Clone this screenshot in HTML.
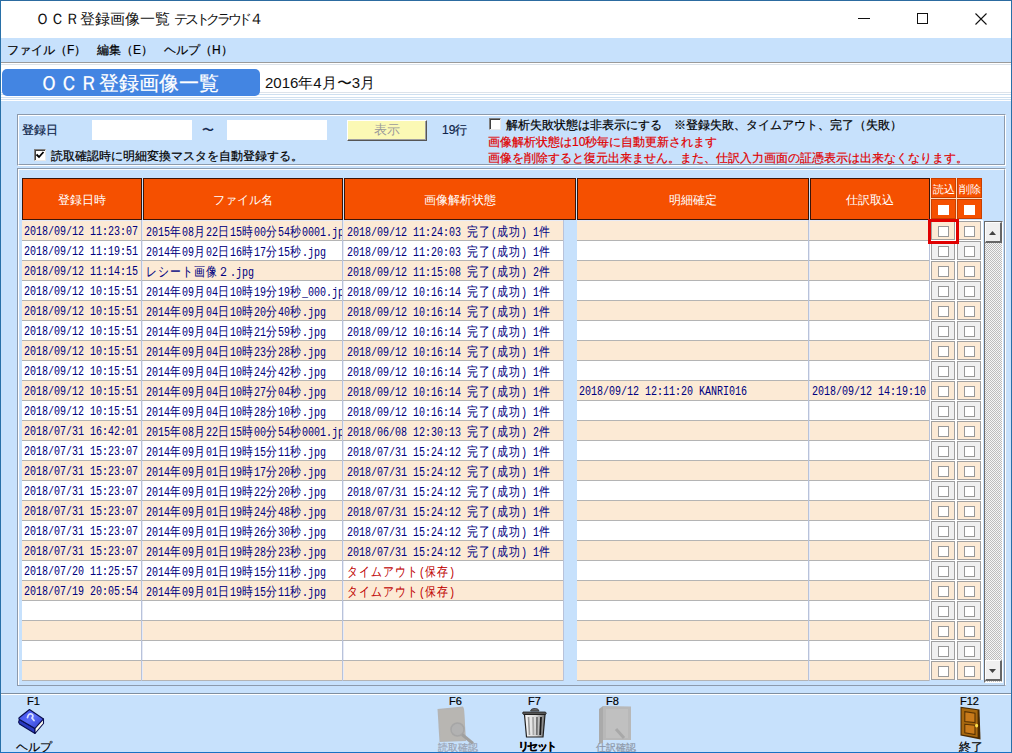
<!DOCTYPE html>
<html><head><meta charset="utf-8"><style>
*{box-sizing:border-box}
html,body{margin:0;padding:0}
body{width:1012px;height:753px;overflow:hidden;position:relative;background:#C7E1FC;font-family:"Liberation Sans",sans-serif;color:#000}
div,span{position:absolute}
.t{-webkit-text-stroke:0.2px currentColor}
.m{-webkit-text-stroke:0.05px currentColor}
.m{font-family:"Liberation Mono",monospace;font-size:12px;line-height:20px;white-space:pre;transform:scaleX(0.8333);transform-origin:0 0;color:#000080}
.m b{font-weight:normal;font-family:"Liberation Sans",sans-serif;font-size:13px;letter-spacing:1.4px;position:static}
.cell{overflow:hidden;height:20px}
.hd{background:#F55000;border:1px solid #3A1408;color:#fff;font-size:12px;text-align:center;line-height:42px}
.ck{width:11px;height:11px;border:1px solid #989898;background:#fff}
.t{white-space:pre}
</style></head><body>

<div style="left:0;top:0;width:1012px;height:753px;border:1px solid #2870A8;border-top-color:#2C6BA0;border-bottom-color:#1872C4;z-index:50;pointer-events:none"></div>
<div style="left:1px;top:1px;width:1010px;height:37px;background:#FFFFFF"></div>
<div class="t" style="left:35px;top:9px;font-size:15px;line-height:20px;color:#101010;-webkit-text-stroke:0">ＯＣＲ登録画像一覧 <span style="position:static;font-size:14px;letter-spacing:-3.3px">テストクラウド</span>４</div>
<div style="left:858px;top:18px;width:12px;height:1px;background:#111"></div>
<div style="left:917px;top:13px;width:11px;height:11px;border:1px solid #111"></div>
<svg style="position:absolute;left:975px;top:13px" width="12" height="12" viewBox="0 0 12 12"><path d="M0.5 0.5L11.5 11.5M11.5 0.5L0.5 11.5" stroke="#111" stroke-width="1.1"/></svg>
<div style="left:1px;top:38px;width:1010px;height:24px;background:#C7E1FC"></div>
<div class="t" style="left:7px;top:42px;font-size:12px;line-height:16px;color:#000">ファイル（F）</div>
<div class="t" style="left:97px;top:42px;font-size:12px;line-height:16px;color:#000">編集（E）</div>
<div class="t" style="left:164px;top:42px;font-size:12px;line-height:16px;color:#000">ヘルプ（H）</div>
<div style="left:1px;top:62px;width:1010px;height:1px;background:#9A9A9A"></div>
<div style="left:1px;top:63px;width:1010px;height:38px;background:#FFFFFF"></div>
<div style="left:1px;top:99px;width:1010px;height:1px;background:#CFE0F0"></div>
<div style="left:1px;top:64px;width:1010px;height:1px;background:#DCE3EA"></div>
<div style="left:1px;top:92px;width:1010px;height:1px;background:#DDE3EA"></div>
<div style="left:1px;top:94px;width:1010px;height:1px;background:#CFE0F0"></div>
<div style="left:1px;top:97px;width:1010px;height:1px;background:#CFE0F0"></div>
<div style="left:2px;top:69px;width:258px;height:27px;background:#4385E2;border-radius:5px"></div>
<div class="t" style="left:39px;top:71px;font-size:20px;line-height:24px;color:#fff">ＯＣＲ登録画像一覧</div>
<div class="t" style="left:265px;top:74px;font-size:15px;line-height:18px;color:#111;-webkit-text-stroke:0">2016年4月〜3月</div>
<div style="left:17px;top:114px;width:989px;height:52px;border-top:1px solid #8C9AAC;border-left:1px solid #8C9AAC;border-right:1px solid #fff;border-bottom:1px solid #fff"></div><div style="left:18px;top:115px;width:987px;height:50px;border-top:1px solid #fff;border-left:1px solid #fff;border-right:1px solid #8C9AAC;border-bottom:1px solid #8C9AAC"></div>
<div class="t" style="left:22px;top:122px;font-size:12px;line-height:16px;color:#0E2448">登録日</div>
<div style="left:92px;top:120px;width:100px;height:20px;background:#fff"></div>
<div class="t" style="left:202px;top:122px;font-size:12px;line-height:16px;color:#0E2448">〜</div>
<div style="left:227px;top:120px;width:100px;height:20px;background:#fff"></div>
<div style="left:347px;top:120px;width:80px;height:21px;background:#FBF9B5;border-top:1px solid #fff;border-left:1px solid #fff;border-right:1px solid #555;border-bottom:1px solid #555;box-shadow:inset -1px -1px 0 #A0A0A0;color:#9A9A9A;font-size:13px;text-align:center;line-height:18px">表示</div>
<div class="t" style="left:442px;top:122px;font-size:12px;line-height:16px;color:#0E2448">19行</div>
<div style="left:34px;top:149px;width:12px;height:12px;background:#fff;border-top:1px solid #808080;border-left:1px solid #808080;border-right:1px solid #E8E8E8;border-bottom:1px solid #E8E8E8;box-shadow:inset 1px 1px 0 #404040"></div>
<svg style="position:absolute;left:35px;top:150px" width="10" height="10" viewBox="0 0 10 10"><path d="M1.5 4.5L4 7L8.5 2" stroke="#000" stroke-width="1.8" fill="none"/></svg>
<div class="t" style="left:51px;top:148px;font-size:12px;line-height:16px;color:#000">読取確認時に明細変換マスタを自動登録する。</div>
<div style="left:489px;top:118px;width:12px;height:12px;background:#fff;border-top:1px solid #808080;border-left:1px solid #808080;border-right:1px solid #E8E8E8;border-bottom:1px solid #E8E8E8;box-shadow:inset 1px 1px 0 #404040"></div>
<div class="t" style="left:506px;top:117px;font-size:12px;line-height:16px;color:#000">解析失敗状態は非表示にする　※登録失敗、タイムアウト、完了（失敗）</div>
<div class="t" style="left:488px;top:134px;font-size:12px;line-height:16px;color:#E00000">画像解析状態は10秒毎に自動更新されます</div>
<div class="t" style="left:488px;top:150px;font-size:12px;line-height:16px;color:#E00000">画像を削除すると復元出来ません。また、仕訳入力画面の証憑表示は出来なくなります。</div>
<div style="left:17px;top:168px;width:989px;height:518px;border-top:1px solid #8C9AAC;border-left:1px solid #8C9AAC;border-right:1px solid #fff;border-bottom:1px solid #8C9AAC"></div>
<div style="left:18px;top:169px;width:987px;height:516px;border-top:1px solid #fff;border-left:1px solid #fff;border-right:1px solid #8C9AAC"></div>
<div class="hd" style="left:22px;top:178px;width:120px;height:42px">登録日時</div>
<div class="hd" style="left:143px;top:178px;width:200px;height:42px">ファイル名</div>
<div class="hd" style="left:344px;top:178px;width:232px;height:42px">画像解析状態</div>
<div class="hd" style="left:577px;top:178px;width:232px;height:42px">明細確定</div>
<div class="hd" style="left:810px;top:178px;width:120px;height:42px">仕訳取込</div>
<div style="left:930px;top:178px;width:52px;height:41px;background:#FBD9C0"></div>
<div style="left:931px;top:178px;width:25px;height:20px;background:#F55000;border:1px solid #C84000;color:#fff;font-size:11px;line-height:20px;text-align:center;white-space:pre">読込</div>
<div style="left:931px;top:199px;width:25px;height:20px;background:#F55000;border:1px solid #C84000"></div>
<div style="left:938px;top:205px;width:11px;height:10px;background:#fff"></div>
<div style="left:957px;top:178px;width:25px;height:20px;background:#F55000;border:1px solid #C84000;color:#fff;font-size:11px;line-height:20px;text-align:center;white-space:pre">削除</div>
<div style="left:957px;top:199px;width:25px;height:20px;background:#F55000;border:1px solid #C84000"></div>
<div style="left:964px;top:205px;width:11px;height:10px;background:#fff"></div>
<div style="left:22px;top:220px;width:908px;height:461px;background:#E6EAF6"></div>
<div class="cell" style="left:22px;top:221px;width:119px;height:19px;background:#FCEAD5"></div>
<div class="cell" style="left:143px;top:221px;width:199px;height:19px;background:#FCEAD5"></div>
<div class="cell" style="left:344px;top:221px;width:219px;height:19px;background:#FCEAD5"></div>
<div class="cell" style="left:577px;top:221px;width:231px;height:19px;background:#FCEAD5"></div>
<div class="cell" style="left:810px;top:221px;width:119px;height:19px;background:#FCEAD5"></div>
<div class="cell" style="left:22px;top:220px;width:119px"><div class="m" style="left:2px;top:2px;color:#000080">2018/09/12 11:23:07</div></div>
<div class="cell" style="left:143px;top:220px;width:199px"><div class="m" style="left:3px;top:2px;color:#000080">2015<b>年</b>08<b>月</b>22<b>日</b>15<b>時</b>00<b>分</b>54<b>秒</b>0001.jpg</div></div>
<div class="cell" style="left:344px;top:220px;width:219px"><div class="m" style="left:3px;top:2px;color:#000080">2018/09/12 11:24:03 <b>完了</b>(<b>成功</b>) 1<b>件</b></div></div>
<div style="left:930px;top:220px;width:27px;height:20px;background:#fff"></div>
<div style="left:931px;top:221px;width:24px;height:19px;background:#FCEAD5;border:1px solid #A0A0A0"></div>
<div class="ck" style="left:938px;top:226px"></div>
<div style="left:956px;top:220px;width:27px;height:20px;background:#fff"></div>
<div style="left:957px;top:221px;width:24px;height:19px;background:#FCEAD5;border:1px solid #A0A0A0"></div>
<div class="ck" style="left:964px;top:226px"></div>
<div class="cell" style="left:22px;top:241px;width:119px;height:19px;background:#FFFFFF"></div>
<div class="cell" style="left:143px;top:241px;width:199px;height:19px;background:#FFFFFF"></div>
<div class="cell" style="left:344px;top:241px;width:219px;height:19px;background:#FFFFFF"></div>
<div class="cell" style="left:577px;top:241px;width:231px;height:19px;background:#FFFFFF"></div>
<div class="cell" style="left:810px;top:241px;width:119px;height:19px;background:#FFFFFF"></div>
<div class="cell" style="left:22px;top:240px;width:119px"><div class="m" style="left:2px;top:2px;color:#000080">2018/09/12 11:19:51</div></div>
<div class="cell" style="left:143px;top:240px;width:199px"><div class="m" style="left:3px;top:2px;color:#000080">2014<b>年</b>09<b>月</b>02<b>日</b>16<b>時</b>17<b>分</b>15<b>秒</b>.jpg</div></div>
<div class="cell" style="left:344px;top:240px;width:219px"><div class="m" style="left:3px;top:2px;color:#000080">2018/09/12 11:20:03 <b>完了</b>(<b>成功</b>) 1<b>件</b></div></div>
<div style="left:930px;top:240px;width:27px;height:20px;background:#fff"></div>
<div style="left:931px;top:241px;width:24px;height:19px;background:#F0F0F0;border:1px solid #A0A0A0"></div>
<div class="ck" style="left:938px;top:246px"></div>
<div style="left:956px;top:240px;width:27px;height:20px;background:#fff"></div>
<div style="left:957px;top:241px;width:24px;height:19px;background:#F0F0F0;border:1px solid #A0A0A0"></div>
<div class="ck" style="left:964px;top:246px"></div>
<div class="cell" style="left:22px;top:261px;width:119px;height:19px;background:#FCEAD5"></div>
<div class="cell" style="left:143px;top:261px;width:199px;height:19px;background:#FCEAD5"></div>
<div class="cell" style="left:344px;top:261px;width:219px;height:19px;background:#FCEAD5"></div>
<div class="cell" style="left:577px;top:261px;width:231px;height:19px;background:#FCEAD5"></div>
<div class="cell" style="left:810px;top:261px;width:119px;height:19px;background:#FCEAD5"></div>
<div class="cell" style="left:22px;top:260px;width:119px"><div class="m" style="left:2px;top:2px;color:#000080">2018/09/12 11:14:15</div></div>
<div class="cell" style="left:143px;top:260px;width:199px"><div class="m" style="left:3px;top:2px;color:#000080"><b>レシート画像２</b>.jpg</div></div>
<div class="cell" style="left:344px;top:260px;width:219px"><div class="m" style="left:3px;top:2px;color:#000080">2018/09/12 11:15:08 <b>完了</b>(<b>成功</b>) 2<b>件</b></div></div>
<div style="left:930px;top:260px;width:27px;height:20px;background:#fff"></div>
<div style="left:931px;top:261px;width:24px;height:19px;background:#FCEAD5;border:1px solid #A0A0A0"></div>
<div class="ck" style="left:938px;top:266px"></div>
<div style="left:956px;top:260px;width:27px;height:20px;background:#fff"></div>
<div style="left:957px;top:261px;width:24px;height:19px;background:#FCEAD5;border:1px solid #A0A0A0"></div>
<div class="ck" style="left:964px;top:266px"></div>
<div class="cell" style="left:22px;top:281px;width:119px;height:19px;background:#FFFFFF"></div>
<div class="cell" style="left:143px;top:281px;width:199px;height:19px;background:#FFFFFF"></div>
<div class="cell" style="left:344px;top:281px;width:219px;height:19px;background:#FFFFFF"></div>
<div class="cell" style="left:577px;top:281px;width:231px;height:19px;background:#FFFFFF"></div>
<div class="cell" style="left:810px;top:281px;width:119px;height:19px;background:#FFFFFF"></div>
<div class="cell" style="left:22px;top:280px;width:119px"><div class="m" style="left:2px;top:2px;color:#000080">2018/09/12 10:15:51</div></div>
<div class="cell" style="left:143px;top:280px;width:199px"><div class="m" style="left:3px;top:2px;color:#000080">2014<b>年</b>09<b>月</b>04<b>日</b>10<b>時</b>19<b>分</b>19<b>秒</b>_000.jpg</div></div>
<div class="cell" style="left:344px;top:280px;width:219px"><div class="m" style="left:3px;top:2px;color:#000080">2018/09/12 10:16:14 <b>完了</b>(<b>成功</b>) 1<b>件</b></div></div>
<div style="left:930px;top:280px;width:27px;height:20px;background:#fff"></div>
<div style="left:931px;top:281px;width:24px;height:19px;background:#F0F0F0;border:1px solid #A0A0A0"></div>
<div class="ck" style="left:938px;top:286px"></div>
<div style="left:956px;top:280px;width:27px;height:20px;background:#fff"></div>
<div style="left:957px;top:281px;width:24px;height:19px;background:#F0F0F0;border:1px solid #A0A0A0"></div>
<div class="ck" style="left:964px;top:286px"></div>
<div class="cell" style="left:22px;top:301px;width:119px;height:19px;background:#FCEAD5"></div>
<div class="cell" style="left:143px;top:301px;width:199px;height:19px;background:#FCEAD5"></div>
<div class="cell" style="left:344px;top:301px;width:219px;height:19px;background:#FCEAD5"></div>
<div class="cell" style="left:577px;top:301px;width:231px;height:19px;background:#FCEAD5"></div>
<div class="cell" style="left:810px;top:301px;width:119px;height:19px;background:#FCEAD5"></div>
<div class="cell" style="left:22px;top:300px;width:119px"><div class="m" style="left:2px;top:2px;color:#000080">2018/09/12 10:15:51</div></div>
<div class="cell" style="left:143px;top:300px;width:199px"><div class="m" style="left:3px;top:2px;color:#000080">2014<b>年</b>09<b>月</b>04<b>日</b>10<b>時</b>20<b>分</b>40<b>秒</b>.jpg</div></div>
<div class="cell" style="left:344px;top:300px;width:219px"><div class="m" style="left:3px;top:2px;color:#000080">2018/09/12 10:16:14 <b>完了</b>(<b>成功</b>) 1<b>件</b></div></div>
<div style="left:930px;top:300px;width:27px;height:20px;background:#fff"></div>
<div style="left:931px;top:301px;width:24px;height:19px;background:#FCEAD5;border:1px solid #A0A0A0"></div>
<div class="ck" style="left:938px;top:306px"></div>
<div style="left:956px;top:300px;width:27px;height:20px;background:#fff"></div>
<div style="left:957px;top:301px;width:24px;height:19px;background:#FCEAD5;border:1px solid #A0A0A0"></div>
<div class="ck" style="left:964px;top:306px"></div>
<div class="cell" style="left:22px;top:321px;width:119px;height:19px;background:#FFFFFF"></div>
<div class="cell" style="left:143px;top:321px;width:199px;height:19px;background:#FFFFFF"></div>
<div class="cell" style="left:344px;top:321px;width:219px;height:19px;background:#FFFFFF"></div>
<div class="cell" style="left:577px;top:321px;width:231px;height:19px;background:#FFFFFF"></div>
<div class="cell" style="left:810px;top:321px;width:119px;height:19px;background:#FFFFFF"></div>
<div class="cell" style="left:22px;top:320px;width:119px"><div class="m" style="left:2px;top:2px;color:#000080">2018/09/12 10:15:51</div></div>
<div class="cell" style="left:143px;top:320px;width:199px"><div class="m" style="left:3px;top:2px;color:#000080">2014<b>年</b>09<b>月</b>04<b>日</b>10<b>時</b>21<b>分</b>59<b>秒</b>.jpg</div></div>
<div class="cell" style="left:344px;top:320px;width:219px"><div class="m" style="left:3px;top:2px;color:#000080">2018/09/12 10:16:14 <b>完了</b>(<b>成功</b>) 1<b>件</b></div></div>
<div style="left:930px;top:320px;width:27px;height:20px;background:#fff"></div>
<div style="left:931px;top:321px;width:24px;height:19px;background:#F0F0F0;border:1px solid #A0A0A0"></div>
<div class="ck" style="left:938px;top:326px"></div>
<div style="left:956px;top:320px;width:27px;height:20px;background:#fff"></div>
<div style="left:957px;top:321px;width:24px;height:19px;background:#F0F0F0;border:1px solid #A0A0A0"></div>
<div class="ck" style="left:964px;top:326px"></div>
<div class="cell" style="left:22px;top:341px;width:119px;height:19px;background:#FCEAD5"></div>
<div class="cell" style="left:143px;top:341px;width:199px;height:19px;background:#FCEAD5"></div>
<div class="cell" style="left:344px;top:341px;width:219px;height:19px;background:#FCEAD5"></div>
<div class="cell" style="left:577px;top:341px;width:231px;height:19px;background:#FCEAD5"></div>
<div class="cell" style="left:810px;top:341px;width:119px;height:19px;background:#FCEAD5"></div>
<div class="cell" style="left:22px;top:340px;width:119px"><div class="m" style="left:2px;top:2px;color:#000080">2018/09/12 10:15:51</div></div>
<div class="cell" style="left:143px;top:340px;width:199px"><div class="m" style="left:3px;top:2px;color:#000080">2014<b>年</b>09<b>月</b>04<b>日</b>10<b>時</b>23<b>分</b>28<b>秒</b>.jpg</div></div>
<div class="cell" style="left:344px;top:340px;width:219px"><div class="m" style="left:3px;top:2px;color:#000080">2018/09/12 10:16:14 <b>完了</b>(<b>成功</b>) 1<b>件</b></div></div>
<div style="left:930px;top:340px;width:27px;height:20px;background:#fff"></div>
<div style="left:931px;top:341px;width:24px;height:19px;background:#FCEAD5;border:1px solid #A0A0A0"></div>
<div class="ck" style="left:938px;top:346px"></div>
<div style="left:956px;top:340px;width:27px;height:20px;background:#fff"></div>
<div style="left:957px;top:341px;width:24px;height:19px;background:#FCEAD5;border:1px solid #A0A0A0"></div>
<div class="ck" style="left:964px;top:346px"></div>
<div class="cell" style="left:22px;top:361px;width:119px;height:19px;background:#FFFFFF"></div>
<div class="cell" style="left:143px;top:361px;width:199px;height:19px;background:#FFFFFF"></div>
<div class="cell" style="left:344px;top:361px;width:219px;height:19px;background:#FFFFFF"></div>
<div class="cell" style="left:577px;top:361px;width:231px;height:19px;background:#FFFFFF"></div>
<div class="cell" style="left:810px;top:361px;width:119px;height:19px;background:#FFFFFF"></div>
<div class="cell" style="left:22px;top:360px;width:119px"><div class="m" style="left:2px;top:2px;color:#000080">2018/09/12 10:15:51</div></div>
<div class="cell" style="left:143px;top:360px;width:199px"><div class="m" style="left:3px;top:2px;color:#000080">2014<b>年</b>09<b>月</b>04<b>日</b>10<b>時</b>24<b>分</b>42<b>秒</b>.jpg</div></div>
<div class="cell" style="left:344px;top:360px;width:219px"><div class="m" style="left:3px;top:2px;color:#000080">2018/09/12 10:16:14 <b>完了</b>(<b>成功</b>) 1<b>件</b></div></div>
<div style="left:930px;top:360px;width:27px;height:20px;background:#fff"></div>
<div style="left:931px;top:361px;width:24px;height:19px;background:#F0F0F0;border:1px solid #A0A0A0"></div>
<div class="ck" style="left:938px;top:366px"></div>
<div style="left:956px;top:360px;width:27px;height:20px;background:#fff"></div>
<div style="left:957px;top:361px;width:24px;height:19px;background:#F0F0F0;border:1px solid #A0A0A0"></div>
<div class="ck" style="left:964px;top:366px"></div>
<div class="cell" style="left:22px;top:381px;width:119px;height:19px;background:#FCEAD5"></div>
<div class="cell" style="left:143px;top:381px;width:199px;height:19px;background:#FCEAD5"></div>
<div class="cell" style="left:344px;top:381px;width:219px;height:19px;background:#FCEAD5"></div>
<div class="cell" style="left:577px;top:381px;width:231px;height:19px;background:#FCEAD5"></div>
<div class="cell" style="left:810px;top:381px;width:119px;height:19px;background:#FCEAD5"></div>
<div class="cell" style="left:22px;top:380px;width:119px"><div class="m" style="left:2px;top:2px;color:#000080">2018/09/12 10:15:51</div></div>
<div class="cell" style="left:143px;top:380px;width:199px"><div class="m" style="left:3px;top:2px;color:#000080">2014<b>年</b>09<b>月</b>04<b>日</b>10<b>時</b>27<b>分</b>04<b>秒</b>.jpg</div></div>
<div class="cell" style="left:344px;top:380px;width:219px"><div class="m" style="left:3px;top:2px;color:#000080">2018/09/12 10:16:14 <b>完了</b>(<b>成功</b>) 1<b>件</b></div></div>
<div class="cell" style="left:577px;top:380px;width:231px"><div class="m" style="left:2px;top:2px;color:#000080">2018/09/12 12:11:20 KANRI016</div></div>
<div class="cell" style="left:810px;top:380px;width:119px"><div class="m" style="left:2px;top:2px;color:#000080">2018/09/12 14:19:10</div></div>
<div style="left:930px;top:380px;width:27px;height:20px;background:#fff"></div>
<div style="left:931px;top:381px;width:24px;height:19px;background:#FCEAD5;border:1px solid #A0A0A0"></div>
<div class="ck" style="left:938px;top:386px"></div>
<div style="left:956px;top:380px;width:27px;height:20px;background:#fff"></div>
<div style="left:957px;top:381px;width:24px;height:19px;background:#FCEAD5;border:1px solid #A0A0A0"></div>
<div class="ck" style="left:964px;top:386px"></div>
<div class="cell" style="left:22px;top:401px;width:119px;height:19px;background:#FFFFFF"></div>
<div class="cell" style="left:143px;top:401px;width:199px;height:19px;background:#FFFFFF"></div>
<div class="cell" style="left:344px;top:401px;width:219px;height:19px;background:#FFFFFF"></div>
<div class="cell" style="left:577px;top:401px;width:231px;height:19px;background:#FFFFFF"></div>
<div class="cell" style="left:810px;top:401px;width:119px;height:19px;background:#FFFFFF"></div>
<div class="cell" style="left:22px;top:400px;width:119px"><div class="m" style="left:2px;top:2px;color:#000080">2018/09/12 10:15:51</div></div>
<div class="cell" style="left:143px;top:400px;width:199px"><div class="m" style="left:3px;top:2px;color:#000080">2014<b>年</b>09<b>月</b>04<b>日</b>10<b>時</b>28<b>分</b>10<b>秒</b>.jpg</div></div>
<div class="cell" style="left:344px;top:400px;width:219px"><div class="m" style="left:3px;top:2px;color:#000080">2018/09/12 10:16:14 <b>完了</b>(<b>成功</b>) 1<b>件</b></div></div>
<div style="left:930px;top:400px;width:27px;height:20px;background:#fff"></div>
<div style="left:931px;top:401px;width:24px;height:19px;background:#F0F0F0;border:1px solid #A0A0A0"></div>
<div class="ck" style="left:938px;top:406px"></div>
<div style="left:956px;top:400px;width:27px;height:20px;background:#fff"></div>
<div style="left:957px;top:401px;width:24px;height:19px;background:#F0F0F0;border:1px solid #A0A0A0"></div>
<div class="ck" style="left:964px;top:406px"></div>
<div class="cell" style="left:22px;top:421px;width:119px;height:19px;background:#FCEAD5"></div>
<div class="cell" style="left:143px;top:421px;width:199px;height:19px;background:#FCEAD5"></div>
<div class="cell" style="left:344px;top:421px;width:219px;height:19px;background:#FCEAD5"></div>
<div class="cell" style="left:577px;top:421px;width:231px;height:19px;background:#FCEAD5"></div>
<div class="cell" style="left:810px;top:421px;width:119px;height:19px;background:#FCEAD5"></div>
<div class="cell" style="left:22px;top:420px;width:119px"><div class="m" style="left:2px;top:2px;color:#000080">2018/07/31 16:42:01</div></div>
<div class="cell" style="left:143px;top:420px;width:199px"><div class="m" style="left:3px;top:2px;color:#000080">2015<b>年</b>08<b>月</b>22<b>日</b>15<b>時</b>00<b>分</b>54<b>秒</b>0001.jpg</div></div>
<div class="cell" style="left:344px;top:420px;width:219px"><div class="m" style="left:3px;top:2px;color:#000080">2018/06/08 12:30:13 <b>完了</b>(<b>成功</b>) 2<b>件</b></div></div>
<div style="left:930px;top:420px;width:27px;height:20px;background:#fff"></div>
<div style="left:931px;top:421px;width:24px;height:19px;background:#FCEAD5;border:1px solid #A0A0A0"></div>
<div class="ck" style="left:938px;top:426px"></div>
<div style="left:956px;top:420px;width:27px;height:20px;background:#fff"></div>
<div style="left:957px;top:421px;width:24px;height:19px;background:#FCEAD5;border:1px solid #A0A0A0"></div>
<div class="ck" style="left:964px;top:426px"></div>
<div class="cell" style="left:22px;top:441px;width:119px;height:19px;background:#FFFFFF"></div>
<div class="cell" style="left:143px;top:441px;width:199px;height:19px;background:#FFFFFF"></div>
<div class="cell" style="left:344px;top:441px;width:219px;height:19px;background:#FFFFFF"></div>
<div class="cell" style="left:577px;top:441px;width:231px;height:19px;background:#FFFFFF"></div>
<div class="cell" style="left:810px;top:441px;width:119px;height:19px;background:#FFFFFF"></div>
<div class="cell" style="left:22px;top:440px;width:119px"><div class="m" style="left:2px;top:2px;color:#000080">2018/07/31 15:23:07</div></div>
<div class="cell" style="left:143px;top:440px;width:199px"><div class="m" style="left:3px;top:2px;color:#000080">2014<b>年</b>09<b>月</b>01<b>日</b>19<b>時</b>15<b>分</b>11<b>秒</b>.jpg</div></div>
<div class="cell" style="left:344px;top:440px;width:219px"><div class="m" style="left:3px;top:2px;color:#000080">2018/07/31 15:24:12 <b>完了</b>(<b>成功</b>) 1<b>件</b></div></div>
<div style="left:930px;top:440px;width:27px;height:20px;background:#fff"></div>
<div style="left:931px;top:441px;width:24px;height:19px;background:#F0F0F0;border:1px solid #A0A0A0"></div>
<div class="ck" style="left:938px;top:446px"></div>
<div style="left:956px;top:440px;width:27px;height:20px;background:#fff"></div>
<div style="left:957px;top:441px;width:24px;height:19px;background:#F0F0F0;border:1px solid #A0A0A0"></div>
<div class="ck" style="left:964px;top:446px"></div>
<div class="cell" style="left:22px;top:461px;width:119px;height:19px;background:#FCEAD5"></div>
<div class="cell" style="left:143px;top:461px;width:199px;height:19px;background:#FCEAD5"></div>
<div class="cell" style="left:344px;top:461px;width:219px;height:19px;background:#FCEAD5"></div>
<div class="cell" style="left:577px;top:461px;width:231px;height:19px;background:#FCEAD5"></div>
<div class="cell" style="left:810px;top:461px;width:119px;height:19px;background:#FCEAD5"></div>
<div class="cell" style="left:22px;top:460px;width:119px"><div class="m" style="left:2px;top:2px;color:#000080">2018/07/31 15:23:07</div></div>
<div class="cell" style="left:143px;top:460px;width:199px"><div class="m" style="left:3px;top:2px;color:#000080">2014<b>年</b>09<b>月</b>01<b>日</b>19<b>時</b>17<b>分</b>20<b>秒</b>.jpg</div></div>
<div class="cell" style="left:344px;top:460px;width:219px"><div class="m" style="left:3px;top:2px;color:#000080">2018/07/31 15:24:12 <b>完了</b>(<b>成功</b>) 1<b>件</b></div></div>
<div style="left:930px;top:460px;width:27px;height:20px;background:#fff"></div>
<div style="left:931px;top:461px;width:24px;height:19px;background:#FCEAD5;border:1px solid #A0A0A0"></div>
<div class="ck" style="left:938px;top:466px"></div>
<div style="left:956px;top:460px;width:27px;height:20px;background:#fff"></div>
<div style="left:957px;top:461px;width:24px;height:19px;background:#FCEAD5;border:1px solid #A0A0A0"></div>
<div class="ck" style="left:964px;top:466px"></div>
<div class="cell" style="left:22px;top:481px;width:119px;height:19px;background:#FFFFFF"></div>
<div class="cell" style="left:143px;top:481px;width:199px;height:19px;background:#FFFFFF"></div>
<div class="cell" style="left:344px;top:481px;width:219px;height:19px;background:#FFFFFF"></div>
<div class="cell" style="left:577px;top:481px;width:231px;height:19px;background:#FFFFFF"></div>
<div class="cell" style="left:810px;top:481px;width:119px;height:19px;background:#FFFFFF"></div>
<div class="cell" style="left:22px;top:480px;width:119px"><div class="m" style="left:2px;top:2px;color:#000080">2018/07/31 15:23:07</div></div>
<div class="cell" style="left:143px;top:480px;width:199px"><div class="m" style="left:3px;top:2px;color:#000080">2014<b>年</b>09<b>月</b>01<b>日</b>19<b>時</b>22<b>分</b>20<b>秒</b>.jpg</div></div>
<div class="cell" style="left:344px;top:480px;width:219px"><div class="m" style="left:3px;top:2px;color:#000080">2018/07/31 15:24:12 <b>完了</b>(<b>成功</b>) 1<b>件</b></div></div>
<div style="left:930px;top:480px;width:27px;height:20px;background:#fff"></div>
<div style="left:931px;top:481px;width:24px;height:19px;background:#F0F0F0;border:1px solid #A0A0A0"></div>
<div class="ck" style="left:938px;top:486px"></div>
<div style="left:956px;top:480px;width:27px;height:20px;background:#fff"></div>
<div style="left:957px;top:481px;width:24px;height:19px;background:#F0F0F0;border:1px solid #A0A0A0"></div>
<div class="ck" style="left:964px;top:486px"></div>
<div class="cell" style="left:22px;top:501px;width:119px;height:19px;background:#FCEAD5"></div>
<div class="cell" style="left:143px;top:501px;width:199px;height:19px;background:#FCEAD5"></div>
<div class="cell" style="left:344px;top:501px;width:219px;height:19px;background:#FCEAD5"></div>
<div class="cell" style="left:577px;top:501px;width:231px;height:19px;background:#FCEAD5"></div>
<div class="cell" style="left:810px;top:501px;width:119px;height:19px;background:#FCEAD5"></div>
<div class="cell" style="left:22px;top:500px;width:119px"><div class="m" style="left:2px;top:2px;color:#000080">2018/07/31 15:23:07</div></div>
<div class="cell" style="left:143px;top:500px;width:199px"><div class="m" style="left:3px;top:2px;color:#000080">2014<b>年</b>09<b>月</b>01<b>日</b>19<b>時</b>24<b>分</b>48<b>秒</b>.jpg</div></div>
<div class="cell" style="left:344px;top:500px;width:219px"><div class="m" style="left:3px;top:2px;color:#000080">2018/07/31 15:24:12 <b>完了</b>(<b>成功</b>) 1<b>件</b></div></div>
<div style="left:930px;top:500px;width:27px;height:20px;background:#fff"></div>
<div style="left:931px;top:501px;width:24px;height:19px;background:#FCEAD5;border:1px solid #A0A0A0"></div>
<div class="ck" style="left:938px;top:506px"></div>
<div style="left:956px;top:500px;width:27px;height:20px;background:#fff"></div>
<div style="left:957px;top:501px;width:24px;height:19px;background:#FCEAD5;border:1px solid #A0A0A0"></div>
<div class="ck" style="left:964px;top:506px"></div>
<div class="cell" style="left:22px;top:521px;width:119px;height:19px;background:#FFFFFF"></div>
<div class="cell" style="left:143px;top:521px;width:199px;height:19px;background:#FFFFFF"></div>
<div class="cell" style="left:344px;top:521px;width:219px;height:19px;background:#FFFFFF"></div>
<div class="cell" style="left:577px;top:521px;width:231px;height:19px;background:#FFFFFF"></div>
<div class="cell" style="left:810px;top:521px;width:119px;height:19px;background:#FFFFFF"></div>
<div class="cell" style="left:22px;top:520px;width:119px"><div class="m" style="left:2px;top:2px;color:#000080">2018/07/31 15:23:07</div></div>
<div class="cell" style="left:143px;top:520px;width:199px"><div class="m" style="left:3px;top:2px;color:#000080">2014<b>年</b>09<b>月</b>01<b>日</b>19<b>時</b>26<b>分</b>30<b>秒</b>.jpg</div></div>
<div class="cell" style="left:344px;top:520px;width:219px"><div class="m" style="left:3px;top:2px;color:#000080">2018/07/31 15:24:12 <b>完了</b>(<b>成功</b>) 1<b>件</b></div></div>
<div style="left:930px;top:520px;width:27px;height:20px;background:#fff"></div>
<div style="left:931px;top:521px;width:24px;height:19px;background:#F0F0F0;border:1px solid #A0A0A0"></div>
<div class="ck" style="left:938px;top:526px"></div>
<div style="left:956px;top:520px;width:27px;height:20px;background:#fff"></div>
<div style="left:957px;top:521px;width:24px;height:19px;background:#F0F0F0;border:1px solid #A0A0A0"></div>
<div class="ck" style="left:964px;top:526px"></div>
<div class="cell" style="left:22px;top:541px;width:119px;height:19px;background:#FCEAD5"></div>
<div class="cell" style="left:143px;top:541px;width:199px;height:19px;background:#FCEAD5"></div>
<div class="cell" style="left:344px;top:541px;width:219px;height:19px;background:#FCEAD5"></div>
<div class="cell" style="left:577px;top:541px;width:231px;height:19px;background:#FCEAD5"></div>
<div class="cell" style="left:810px;top:541px;width:119px;height:19px;background:#FCEAD5"></div>
<div class="cell" style="left:22px;top:540px;width:119px"><div class="m" style="left:2px;top:2px;color:#000080">2018/07/31 15:23:07</div></div>
<div class="cell" style="left:143px;top:540px;width:199px"><div class="m" style="left:3px;top:2px;color:#000080">2014<b>年</b>09<b>月</b>01<b>日</b>19<b>時</b>28<b>分</b>23<b>秒</b>.jpg</div></div>
<div class="cell" style="left:344px;top:540px;width:219px"><div class="m" style="left:3px;top:2px;color:#000080">2018/07/31 15:24:12 <b>完了</b>(<b>成功</b>) 1<b>件</b></div></div>
<div style="left:930px;top:540px;width:27px;height:20px;background:#fff"></div>
<div style="left:931px;top:541px;width:24px;height:19px;background:#FCEAD5;border:1px solid #A0A0A0"></div>
<div class="ck" style="left:938px;top:546px"></div>
<div style="left:956px;top:540px;width:27px;height:20px;background:#fff"></div>
<div style="left:957px;top:541px;width:24px;height:19px;background:#FCEAD5;border:1px solid #A0A0A0"></div>
<div class="ck" style="left:964px;top:546px"></div>
<div class="cell" style="left:22px;top:561px;width:119px;height:19px;background:#FFFFFF"></div>
<div class="cell" style="left:143px;top:561px;width:199px;height:19px;background:#FFFFFF"></div>
<div class="cell" style="left:344px;top:561px;width:219px;height:19px;background:#FFFFFF"></div>
<div class="cell" style="left:577px;top:561px;width:231px;height:19px;background:#FFFFFF"></div>
<div class="cell" style="left:810px;top:561px;width:119px;height:19px;background:#FFFFFF"></div>
<div class="cell" style="left:22px;top:560px;width:119px"><div class="m" style="left:2px;top:2px;color:#000080">2018/07/20 11:25:57</div></div>
<div class="cell" style="left:143px;top:560px;width:199px"><div class="m" style="left:3px;top:2px;color:#000080">2014<b>年</b>09<b>月</b>01<b>日</b>19<b>時</b>15<b>分</b>11<b>秒</b>.jpg</div></div>
<div class="cell" style="left:344px;top:560px;width:219px"><div class="m" style="left:3px;top:2px;color:#C00000"><b>タイムアウト</b>(<b>保存</b>)</div></div>
<div style="left:930px;top:560px;width:27px;height:20px;background:#fff"></div>
<div style="left:931px;top:561px;width:24px;height:19px;background:#F0F0F0;border:1px solid #A0A0A0"></div>
<div class="ck" style="left:938px;top:566px"></div>
<div style="left:956px;top:560px;width:27px;height:20px;background:#fff"></div>
<div style="left:957px;top:561px;width:24px;height:19px;background:#F0F0F0;border:1px solid #A0A0A0"></div>
<div class="ck" style="left:964px;top:566px"></div>
<div class="cell" style="left:22px;top:581px;width:119px;height:19px;background:#FCEAD5"></div>
<div class="cell" style="left:143px;top:581px;width:199px;height:19px;background:#FCEAD5"></div>
<div class="cell" style="left:344px;top:581px;width:219px;height:19px;background:#FCEAD5"></div>
<div class="cell" style="left:577px;top:581px;width:231px;height:19px;background:#FCEAD5"></div>
<div class="cell" style="left:810px;top:581px;width:119px;height:19px;background:#FCEAD5"></div>
<div class="cell" style="left:22px;top:580px;width:119px"><div class="m" style="left:2px;top:2px;color:#000080">2018/07/19 20:05:54</div></div>
<div class="cell" style="left:143px;top:580px;width:199px"><div class="m" style="left:3px;top:2px;color:#000080">2014<b>年</b>09<b>月</b>01<b>日</b>19<b>時</b>15<b>分</b>11<b>秒</b>.jpg</div></div>
<div class="cell" style="left:344px;top:580px;width:219px"><div class="m" style="left:3px;top:2px;color:#C00000"><b>タイムアウト</b>(<b>保存</b>)</div></div>
<div style="left:930px;top:580px;width:27px;height:20px;background:#fff"></div>
<div style="left:931px;top:581px;width:24px;height:19px;background:#FCEAD5;border:1px solid #A0A0A0"></div>
<div class="ck" style="left:938px;top:586px"></div>
<div style="left:956px;top:580px;width:27px;height:20px;background:#fff"></div>
<div style="left:957px;top:581px;width:24px;height:19px;background:#FCEAD5;border:1px solid #A0A0A0"></div>
<div class="ck" style="left:964px;top:586px"></div>
<div class="cell" style="left:22px;top:601px;width:119px;height:19px;background:#FFFFFF"></div>
<div class="cell" style="left:143px;top:601px;width:199px;height:19px;background:#FFFFFF"></div>
<div class="cell" style="left:344px;top:601px;width:219px;height:19px;background:#FFFFFF"></div>
<div class="cell" style="left:577px;top:601px;width:231px;height:19px;background:#FFFFFF"></div>
<div class="cell" style="left:810px;top:601px;width:119px;height:19px;background:#FFFFFF"></div>
<div style="left:930px;top:600px;width:27px;height:20px;background:#fff"></div>
<div style="left:931px;top:601px;width:24px;height:19px;background:#F0F0F0;border:1px solid #A0A0A0"></div>
<div class="ck" style="left:938px;top:606px"></div>
<div style="left:956px;top:600px;width:27px;height:20px;background:#fff"></div>
<div style="left:957px;top:601px;width:24px;height:19px;background:#F0F0F0;border:1px solid #A0A0A0"></div>
<div class="ck" style="left:964px;top:606px"></div>
<div class="cell" style="left:22px;top:621px;width:119px;height:19px;background:#FCEAD5"></div>
<div class="cell" style="left:143px;top:621px;width:199px;height:19px;background:#FCEAD5"></div>
<div class="cell" style="left:344px;top:621px;width:219px;height:19px;background:#FCEAD5"></div>
<div class="cell" style="left:577px;top:621px;width:231px;height:19px;background:#FCEAD5"></div>
<div class="cell" style="left:810px;top:621px;width:119px;height:19px;background:#FCEAD5"></div>
<div style="left:930px;top:620px;width:27px;height:20px;background:#fff"></div>
<div style="left:931px;top:621px;width:24px;height:19px;background:#FCEAD5;border:1px solid #A0A0A0"></div>
<div class="ck" style="left:938px;top:626px"></div>
<div style="left:956px;top:620px;width:27px;height:20px;background:#fff"></div>
<div style="left:957px;top:621px;width:24px;height:19px;background:#FCEAD5;border:1px solid #A0A0A0"></div>
<div class="ck" style="left:964px;top:626px"></div>
<div class="cell" style="left:22px;top:641px;width:119px;height:19px;background:#FFFFFF"></div>
<div class="cell" style="left:143px;top:641px;width:199px;height:19px;background:#FFFFFF"></div>
<div class="cell" style="left:344px;top:641px;width:219px;height:19px;background:#FFFFFF"></div>
<div class="cell" style="left:577px;top:641px;width:231px;height:19px;background:#FFFFFF"></div>
<div class="cell" style="left:810px;top:641px;width:119px;height:19px;background:#FFFFFF"></div>
<div style="left:930px;top:640px;width:27px;height:20px;background:#fff"></div>
<div style="left:931px;top:641px;width:24px;height:19px;background:#F0F0F0;border:1px solid #A0A0A0"></div>
<div class="ck" style="left:938px;top:646px"></div>
<div style="left:956px;top:640px;width:27px;height:20px;background:#fff"></div>
<div style="left:957px;top:641px;width:24px;height:19px;background:#F0F0F0;border:1px solid #A0A0A0"></div>
<div class="ck" style="left:964px;top:646px"></div>
<div class="cell" style="left:22px;top:661px;width:119px;height:19px;background:#FCEAD5"></div>
<div class="cell" style="left:143px;top:661px;width:199px;height:19px;background:#FCEAD5"></div>
<div class="cell" style="left:344px;top:661px;width:219px;height:19px;background:#FCEAD5"></div>
<div class="cell" style="left:577px;top:661px;width:231px;height:19px;background:#FCEAD5"></div>
<div class="cell" style="left:810px;top:661px;width:119px;height:19px;background:#FCEAD5"></div>
<div style="left:930px;top:660px;width:27px;height:20px;background:#fff"></div>
<div style="left:931px;top:661px;width:24px;height:19px;background:#FCEAD5;border:1px solid #A0A0A0"></div>
<div class="ck" style="left:938px;top:666px"></div>
<div style="left:956px;top:660px;width:27px;height:20px;background:#fff"></div>
<div style="left:957px;top:661px;width:24px;height:19px;background:#FCEAD5;border:1px solid #A0A0A0"></div>
<div class="ck" style="left:964px;top:666px"></div>
<div style="left:22px;top:240px;width:542px;height:1px;background:#B4B4B4"></div>
<div style="left:577px;top:240px;width:352px;height:1px;background:#B4B4B4"></div>
<div style="left:22px;top:260px;width:542px;height:1px;background:#B4B4B4"></div>
<div style="left:577px;top:260px;width:352px;height:1px;background:#B4B4B4"></div>
<div style="left:22px;top:280px;width:542px;height:1px;background:#B4B4B4"></div>
<div style="left:577px;top:280px;width:352px;height:1px;background:#B4B4B4"></div>
<div style="left:22px;top:300px;width:542px;height:1px;background:#B4B4B4"></div>
<div style="left:577px;top:300px;width:352px;height:1px;background:#B4B4B4"></div>
<div style="left:22px;top:320px;width:542px;height:1px;background:#B4B4B4"></div>
<div style="left:577px;top:320px;width:352px;height:1px;background:#B4B4B4"></div>
<div style="left:22px;top:340px;width:542px;height:1px;background:#B4B4B4"></div>
<div style="left:577px;top:340px;width:352px;height:1px;background:#B4B4B4"></div>
<div style="left:22px;top:360px;width:542px;height:1px;background:#B4B4B4"></div>
<div style="left:577px;top:360px;width:352px;height:1px;background:#B4B4B4"></div>
<div style="left:22px;top:380px;width:542px;height:1px;background:#B4B4B4"></div>
<div style="left:577px;top:380px;width:352px;height:1px;background:#B4B4B4"></div>
<div style="left:22px;top:400px;width:542px;height:1px;background:#B4B4B4"></div>
<div style="left:577px;top:400px;width:352px;height:1px;background:#B4B4B4"></div>
<div style="left:22px;top:420px;width:542px;height:1px;background:#B4B4B4"></div>
<div style="left:577px;top:420px;width:352px;height:1px;background:#B4B4B4"></div>
<div style="left:22px;top:440px;width:542px;height:1px;background:#B4B4B4"></div>
<div style="left:577px;top:440px;width:352px;height:1px;background:#B4B4B4"></div>
<div style="left:22px;top:460px;width:542px;height:1px;background:#B4B4B4"></div>
<div style="left:577px;top:460px;width:352px;height:1px;background:#B4B4B4"></div>
<div style="left:22px;top:480px;width:542px;height:1px;background:#B4B4B4"></div>
<div style="left:577px;top:480px;width:352px;height:1px;background:#B4B4B4"></div>
<div style="left:22px;top:500px;width:542px;height:1px;background:#B4B4B4"></div>
<div style="left:577px;top:500px;width:352px;height:1px;background:#B4B4B4"></div>
<div style="left:22px;top:520px;width:542px;height:1px;background:#B4B4B4"></div>
<div style="left:577px;top:520px;width:352px;height:1px;background:#B4B4B4"></div>
<div style="left:22px;top:540px;width:542px;height:1px;background:#B4B4B4"></div>
<div style="left:577px;top:540px;width:352px;height:1px;background:#B4B4B4"></div>
<div style="left:22px;top:560px;width:542px;height:1px;background:#B4B4B4"></div>
<div style="left:577px;top:560px;width:352px;height:1px;background:#B4B4B4"></div>
<div style="left:22px;top:580px;width:542px;height:1px;background:#B4B4B4"></div>
<div style="left:577px;top:580px;width:352px;height:1px;background:#B4B4B4"></div>
<div style="left:22px;top:600px;width:542px;height:1px;background:#B4B4B4"></div>
<div style="left:577px;top:600px;width:352px;height:1px;background:#B4B4B4"></div>
<div style="left:22px;top:620px;width:542px;height:1px;background:#B4B4B4"></div>
<div style="left:577px;top:620px;width:352px;height:1px;background:#B4B4B4"></div>
<div style="left:22px;top:640px;width:542px;height:1px;background:#B4B4B4"></div>
<div style="left:577px;top:640px;width:352px;height:1px;background:#B4B4B4"></div>
<div style="left:22px;top:660px;width:542px;height:1px;background:#B4B4B4"></div>
<div style="left:577px;top:660px;width:352px;height:1px;background:#B4B4B4"></div>
<div style="left:22px;top:680px;width:542px;height:1px;background:#B4B4B4"></div>
<div style="left:577px;top:680px;width:352px;height:1px;background:#B4B4B4"></div>
<div style="left:141px;top:220px;width:1px;height:461px;background:#B8C2DA"></div>
<div style="left:342px;top:220px;width:1px;height:461px;background:#B8C2DA"></div>
<div style="left:563px;top:220px;width:1px;height:461px;background:#B8C2DA"></div>
<div style="left:808px;top:220px;width:1px;height:461px;background:#B8C2DA"></div>
<div style="left:929px;top:220px;width:1px;height:461px;background:#B8C2DA"></div>
<div style="left:564px;top:220px;width:13px;height:461px;background:#C7E1FC"></div>
<div style="left:928px;top:219px;width:31px;height:25px;border:3px solid #E00000"></div>
<div style="left:984px;top:221px;width:19px;height:462px;border-left:1px solid #6A6A6A;border-top:1px solid #6A6A6A;border-right:1px solid #fff;border-bottom:1px solid #fff;background:repeating-conic-gradient(#BDBDBD 0 25%,#F6F6F6 0 50%) 0 0/2px 2px"></div>
<div style="left:985px;top:222px;width:17px;height:21px;background:#F0F0F0;border-top:1px solid #fff;border-left:1px solid #fff;border-right:2px solid #666;border-bottom:2px solid #666"></div>
<svg style="position:absolute;left:989px;top:231px" width="7" height="4" viewBox="0 0 7 4"><path d="M0 4L3.5 0L7 4Z" fill="#444"/></svg>
<div style="left:985px;top:660px;width:17px;height:21px;background:#F0F0F0;border-top:1px solid #fff;border-left:1px solid #fff;border-right:2px solid #666;border-bottom:2px solid #666"></div>
<svg style="position:absolute;left:989px;top:669px" width="7" height="4" viewBox="0 0 7 4"><path d="M0 0L3.5 4L7 0Z" fill="#444"/></svg>
<div style="left:1px;top:693px;width:1010px;height:1px;background:#7F8FA0"></div>
<div style="left:1px;top:694px;width:1010px;height:1px;background:#FFFFFF"></div>
<div class="t" style="left:27px;top:695px;font-size:11px;line-height:12px;color:#000">F1</div>
<div class="t" style="left:449px;top:695px;font-size:11px;line-height:12px;color:#000">F6</div>
<div class="t" style="left:528px;top:695px;font-size:11px;line-height:12px;color:#000">F7</div>
<div class="t" style="left:606px;top:695px;font-size:11px;line-height:12px;color:#000">F8</div>
<div class="t" style="left:960px;top:695px;font-size:11px;line-height:12px;color:#000">F12</div>
<svg style="position:absolute;left:17px;top:708px" width="29" height="27" viewBox="0 0 29 27">
<defs><linearGradient id="bk" x1="0" y1="0" x2="1" y2="1"><stop offset="0" stop-color="#3848E8"/><stop offset="0.5" stop-color="#5A6CF8"/><stop offset="1" stop-color="#2A38C8"/></linearGradient></defs>
<path d="M2 12.5Q1 14 2.5 16L18 25.5L18 20.5L2.5 11.5Z" fill="#2838C0" stroke="#0A0E50" stroke-width="1.1" stroke-linejoin="round"/>
<path d="M12.5 1.5L26.5 11L18 20.5L2.5 11.5Q1 10.5 3 9Z" fill="url(#bk)" stroke="#0A0E50" stroke-width="1.1" stroke-linejoin="round"/>
<path d="M18 20.5L26.5 11L26.5 15.5L18 25.5Z" fill="#FAFAF0" stroke="#0A0E50" stroke-width="1.1" stroke-linejoin="round"/>
<path d="M10.5 9.5Q11.5 5 14.5 6Q17 7.5 15 10L17 12.5" stroke="#D8DEFF" stroke-width="1.8" fill="none" stroke-linecap="round"/>
</svg>
<div class="t" style="left:16px;top:740px;font-size:12px;line-height:14px;color:#000">ヘルプ</div>
<svg style="position:absolute;left:437px;top:706px" width="40" height="39" viewBox="0 0 40 39">
<path d="M0.5 3L26 0.5L27 3L29 35L2.5 36Z" fill="#B4B4B4"/>
<path d="M2.5 4L27 3L28 34L3.5 35Z" fill="#B8B6B2"/>
<circle cx="20.5" cy="23.5" r="6.5" fill="#B2B2B2" stroke="#A6A6A6" stroke-width="1.5"/>
<path d="M25 28.5L36 37.5" stroke="#A0A0A0" stroke-width="3"/>
</svg>
<div class="t" style="left:438px;top:742px;font-size:9.5px;line-height:11px;color:#9AA4B4">読取確認</div>
<svg style="position:absolute;left:522px;top:708px" width="25" height="30" viewBox="0 0 25 30">
<defs><linearGradient id="tr" x1="0" y1="0" x2="1" y2="0"><stop offset="0" stop-color="#F8F8F8"/><stop offset="0.55" stop-color="#D8D8D8"/><stop offset="1" stop-color="#707070"/></linearGradient></defs>
<path d="M8.5 3Q9 0.5 12 0.5L13.5 0.5Q16.5 0.5 17 3Z" fill="#666" stroke="#333" stroke-width="0.8"/>
<path d="M1 4Q0 5.5 1.5 6.5L23.5 6.5Q25 5.5 23.5 4Z" fill="#555" stroke="#222" stroke-width="0.8"/>
<path d="M2.5 6.5L23 6.5L21 29L4.5 29Z" fill="url(#tr)" stroke="#202020" stroke-width="1.2"/>
<path d="M6.5 9L7.5 27" stroke="#9A9A9A" stroke-width="1.6"/>
<path d="M11 9L11.5 27" stroke="#A8A8A8" stroke-width="1.8"/>
<path d="M15 9L14.8 27" stroke="#707070" stroke-width="1.8"/>
<path d="M19 9L18.2 27" stroke="#1A1A1A" stroke-width="1.8"/>
</svg>
<div class="t" style="left:518px;top:740px;font-size:10.5px;line-height:12px;font-weight:bold;letter-spacing:-1.7px;color:#000">リセット</div>
<svg style="position:absolute;left:598px;top:705px" width="34" height="40" viewBox="0 0 34 40">
<path d="M5 1L33 1.5L33 35L5 35Z" fill="#B8B8B8"/>
<path d="M1 4L5 1L5 38L1 39Z" fill="#AAAAAA"/>
<path d="M8 4L30 4L30 33L8 33Z" fill="#C0C0C0"/>
<path d="M18 24L26 33" stroke="#A8A8A8" stroke-width="3"/>
</svg>
<div class="t" style="left:596px;top:742px;font-size:9.5px;line-height:11px;color:#8E98A8">仕訳確認</div>
<svg style="position:absolute;left:960px;top:706px" width="21" height="34" viewBox="0 0 21 34">
<path d="M0.5 0.8L19.5 3.5L20.5 33.5L0.5 29.5Z" fill="#4A2A02"/>
<path d="M1.6 2L17.6 4.2L17.6 31.2L1.6 28.4Z" fill="#A8680F"/>
<path d="M4.8 5.6L15 7.2L15 16.6L4.8 15.6Z" fill="#C97A1A" stroke="#5A3404" stroke-width="1.1"/>
<path d="M4.8 18.2L15 19.2L15 28.6L4.8 26.8Z" fill="#C97A1A" stroke="#5A3404" stroke-width="1.1"/>
<ellipse cx="16.6" cy="19.6" rx="1.5" ry="1.9" fill="#FFE048"/>
</svg>
<div class="t" style="left:959px;top:740px;font-size:12px;line-height:14px;color:#000">終了</div>
</body></html>
